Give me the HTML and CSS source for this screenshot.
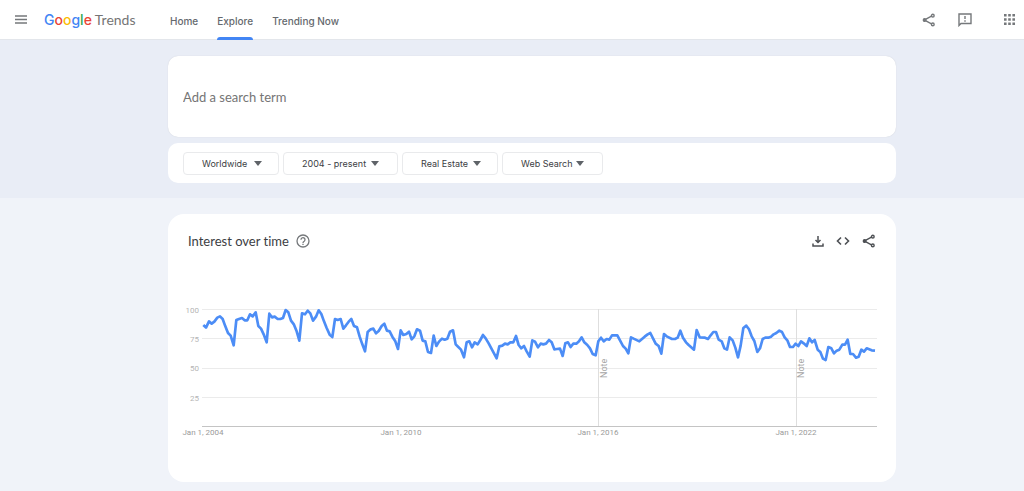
FILE: index.html
```
<!DOCTYPE html>
<html lang="en">
<head>
<meta charset="utf-8">
<title>Google Trends</title>
<link rel="stylesheet" href="styles.css">
</head>
<body>
<svg class="defs" width="0" height="0" aria-hidden="true">
  <symbol id="share" viewBox="0 0 24 24">
    <g fill="none" stroke="currentColor" stroke-width="2.400"><path d="M6 11 17 5M6 13 17 19"/><circle cx="18.500" cy="4.500" r="2.300"/><circle cx="18.500" cy="19.500" r="2.300"/><circle cx="4.500" cy="12" r="2.200" fill="currentColor"/></g>
  </symbol>
</svg>
<header class="topbar">
  <button class="icon-button menu" aria-label="Main menu"><svg width="12" height="9" viewBox="0 0 12 9"><path d="M0 1h12M0 4.500h12M0 8h12" stroke="currentColor" stroke-width="1.400"/></svg></button>
  <a class="logo" href="#" aria-label="Google Trends"><span class="google"><span class="blue">G</span><span class="red">o</span><span class="yellow">o</span><span class="blue">g</span><span class="green">l</span><span class="red">e</span></span><span class="trends">Trends</span></a>
  <nav class="nav">
    <a href="#">Home</a>
    <a href="#" class="active" aria-current="page">Explore</a>
    <a href="#">Trending Now</a>
  </nav>
  <div class="tools">
    <button class="icon-button" aria-label="Share"><svg width="14" height="14"><use href="#share"/></svg></button>
    <button class="icon-button" aria-label="Send feedback"><svg width="14" height="14" viewBox="0 0 14 14"><path d="M1 12.500V1h12v9.500H3z" fill="none" stroke="currentColor" stroke-width="1.400"/><path d="M7 3v3M7 7.300v1.400" stroke="currentColor" stroke-width="1.400"/></svg></button>
    <button class="icon-button apps" aria-label="Google apps"><svg width="11" height="11" viewBox="0 0 11 11" fill="currentColor"><path d="M0 0h2.600v2.600H0zM4.200 0h2.600v2.600H4.200zM8.400 0H11v2.600H8.400zM0 4.200h2.600v2.600H0zM4.200 4.200h2.600v2.600H4.200zM8.400 4.200H11v2.600H8.400zM0 8.400h2.600V11H0zM4.200 8.400h2.600V11H4.200zM8.400 8.400H11V11H8.400z"/></svg></button>
  </div>
</header>
<main>
  <section class="hero">
    <div class="card search"><input type="text" placeholder="Add a search term" aria-label="Add a search term"></div>
    <div class="card filters">
      <div class="filter"><select aria-label="Location"><option>Worldwide</option></select><svg class="caret" viewBox="0 0 8 5"><path d="M0 0h8L4 5z"/></svg></div>
      <div class="filter period"><select aria-label="Time range"><option>2004 - present</option></select><svg class="caret" viewBox="0 0 8 5"><path d="M0 0h8L4 5z"/></svg></div>
      <div class="filter"><select aria-label="Category"><option>Real Estate</option></select><svg class="caret" viewBox="0 0 8 5"><path d="M0 0h8L4 5z"/></svg></div>
      <div class="filter source"><select aria-label="Search type"><option>Web Search</option></select><svg class="caret" viewBox="0 0 8 5"><path d="M0 0h8L4 5z"/></svg></div>
    </div>
  </section>
  <section class="results">
    <article class="card chart-card">
      <div class="chart-head">
        <h1>Interest over time</h1>
        <button class="icon-button help" aria-label="Help"><svg width="14" height="14" viewBox="0 0 14 14" fill="none" stroke="currentColor" stroke-width="1.300"><circle cx="7" cy="7" r="6"/><path d="M5 5.700a2 2 0 1 1 3.200 1.500Q7 8 7 9M7 9.800v1.200"/></svg></button>
        <div class="chart-tools">
          <button class="icon-button" aria-label="Download CSV"><svg width="12" height="12" viewBox="0 0 12 12" fill="none" stroke="currentColor" stroke-width="1.500"><path d="M6 1v6.500M3.500 5 6 7.500 8.500 5M1 8.500V11h10V8.500"/></svg></button>
          <button class="icon-button" aria-label="Embed"><svg width="14" height="12" viewBox="0 0 14 12" fill="none" stroke="currentColor" stroke-width="1.600"><path d="M5 2.500 1.500 6 5 9.500M9 2.500 12.500 6 9 9.500"/></svg></button>
          <button class="icon-button" aria-label="Share chart"><svg width="14" height="14"><use href="#share"/></svg></button>
        </div>
      </div>
      <svg class="chart" viewBox="168 300 728 140" role="img" aria-label="Interest over time">
        <g class="grid"><path d="M202 309.500h675M202 338.500h675M202 368.500h675M202 397.500h675"/><path class="note-line" d="M598.500 309v117M796.500 309v117"/><path class="axis" d="M202 426.500h675"/></g>
        <g class="scale"><text x="199" y="313">100</text><text x="199" y="342">75</text><text x="199" y="371">50</text><text x="199" y="401">25</text></g>
        <g class="dates"><text x="203" y="435">Jan 1, 2004</text><text x="401" y="435">Jan 1, 2010</text><text x="598" y="435">Jan 1, 2016</text><text x="796" y="435">Jan 1, 2022</text></g>
        <g class="notes"><text transform="translate(607 378) rotate(-90)">Note</text><text transform="translate(804 378) rotate(-90)">Note</text></g>
        <polyline class="series" transform="translate(180 300) scale(.33333)" points="70,75 78,83 87,64 95,71 103,65 112,53 120,49 128,57 136,79 144,99 152,107 161,136 169,60 177,57 186,54 194,61 202,61 210,43 218,49 227,37 235,78 243,86 251,103 260,127 268,41 276,52 284,50 293,57 301,57 309,54 317,30 325,37 333,62 342,74 350,94 358,122 366,40 375,43 383,32 391,40 399,62 408,50 416,31 424,42 432,64 440,84 449,104 457,111 465,57 473,60 482,57 490,86 498,76 506,65 514,57 522,78 531,82 539,110 547,133 555,154 563,96 572,88 580,86 588,100 596,93 605,78 613,71 621,92 629,94 637,110 646,124 654,147 662,91 670,105 679,102 687,95 695,118 703,109 711,88 720,92 728,122 736,124 744,156 753,159 761,107 769,138 777,125 786,116 794,119 802,116 810,95 819,91 827,133 835,141 843,149 852,172 860,127 868,124 876,142 884,127 893,133 901,120 909,105 917,115 926,130 934,145 942,160 950,175 958,139 967,137 975,131 983,133 991,127 1000,127 1008,108 1016,135 1024,145 1032,138 1040,154 1049,170 1057,121 1065,125 1074,142 1082,131 1090,133 1098,131 1107,120 1115,127 1123,148 1131,147 1140,146 1148,168 1156,130 1164,127 1172,141 1180,131 1189,131 1197,124 1205,112 1213,127 1222,135 1230,145 1238,162 1247,166 1255,124 1263,113 1271,124 1280,117 1288,119 1296,106 1312,106 1320,121 1329,138 1337,146 1345,160 1353,112 1361,116 1378,124 1386,117 1394,110 1403,103 1411,99 1419,115 1427,131 1436,138 1444,161 1452,102 1460,109 1476,117 1485,117 1493,113 1501,92 1509,113 1518,127 1526,135 1542,149 1550,90 1559,112 1575,113 1584,117 1592,106 1600,96 1608,96 1616,119 1625,124 1633,145 1641,149 1649,112 1658,121 1666,143 1674,172 1682,137 1690,84 1699,77 1707,88 1715,109 1723,123 1732,156 1740,145 1748,117 1756,113 1765,113 1773,110 1781,103 1789,99 1798,92 1806,96 1814,112 1822,121 1830,141 1839,141 1847,131 1855,138 1863,124 1871,130 1880,138 1888,115 1896,127 1904,120 1913,149 1921,156 1929,176 1937,180 1945,141 1954,145 1962,160 1970,152 1978,149 1987,134 1995,134 2003,119 2011,162 2019,162 2028,173 2036,170 2044,149 2052,155 2060,145 2075,151 2085,152"/>
      </svg>
    </article>
  </section>
</main>
</body>
</html>
```
FILE: styles.css
```
* { box-sizing: border-box; }
body { margin: 0; background: #f0f3f9; color: #3c4043; font-family: Lato, "Open Sans", sans-serif; font-variant-ligatures: none; }
.defs { position: absolute; }
button, input, select { font: inherit; color: inherit; }
.icon-button { display: grid; place-items: center; padding: 0; border: 0; background: none; color: #75787b; cursor: pointer; }
.icon-button svg { display: block; }

.topbar { display: flex; align-items: center; height: 40px; padding: 0 9px 0 15px; background: #fff; border-bottom: 1px solid #e3e6eb; }
.logo { display: flex; align-items: baseline; gap: 3px; margin-left: 17px; width: 90px; color: #757575; font-size: 14px; line-height: 20px; text-decoration: none; white-space: nowrap; }
.google { font-size: 14px; font-weight: 500; font-family: Inter, sans-serif; }
.blue { color: #4285f4; }
.red { color: #ea4335; }
.yellow { color: #fbbc05; }
.green { color: #34a853; }
.nav { display: flex; align-self: stretch; gap: 19px; margin-left: 36px; font-family: Inter, sans-serif; font-size: 10px; font-weight: 500; white-space: nowrap; }
.nav a { position: relative; display: flex; align-items: center; height: 40px; padding-top: 2px; color: #65696e; text-decoration: none; }
.nav .active::after { content: ""; position: absolute; inset: auto 0 0; height: 3px; border-radius: 3px 3px 0 0; background: #4285f4; }
.tools { display: flex; align-items: center; gap: 22px; margin-left: auto; }
.apps { margin-left: 10px; }

.hero { display: grid; gap: 6px; padding: 16px 128px 15px 168px; background: #e9edf6; }
.card { background: #fff; border-radius: 10px; }
.search { display: flex; height: 81px; padding: 0 15px; box-shadow: 0 0 1px #c5c9d2; }
.search input { flex: 1; min-width: 0; padding: 0; border: 0; outline: 0; background: none; font-size: 13px; }
.search input::placeholder { color: #757575; opacity: 1; }
.filters { display: flex; gap: 4px; padding: 9px 15px 8px; }
.filter { display: grid; align-items: center; width: 96px; height: 23px; border: 1px solid #e9eaec; border-radius: 4px; }
.period { width: 115px; }
.source { width: 101px; }
.filter select { grid-area: 1 / 1; width: 100%; padding: 0 0 0 18px; border: 0; outline: 0; background: none; appearance: none; font-family: Inter, sans-serif; font-size: 9px; }
.caret { grid-area: 1 / 1; justify-self: end; width: 8px; height: 5px; margin-right: 16px; fill: #5f6368; pointer-events: none; }
.period .caret, .source .caret { margin-right: 18px; }

.results { padding: 16px 128px 9px 168px; }
.chart-card { border-radius: 16px; padding: 17px 0 42px; }
.chart-head { display: flex; align-items: center; height: 20px; padding: 0 20px; }
.chart-head h1 { margin: 0; font-size: 13px; font-weight: 400; }
.help { margin-left: 7px; }
.chart-tools { display: flex; align-items: center; gap: 12px; margin-left: auto; }
.chart-tools .icon-button { color: #4d5054; }
.chart { display: block; width: 100%; margin-top: 49px; font-family: Roboto, sans-serif; font-size: 8px; }
.grid { fill: none; stroke: #ebebeb; }
.grid .note-line { stroke: #dedede; }
.grid .axis { stroke: #c4c4c4; }
.scale { fill: #b5b5b5; text-anchor: end; }
.dates { fill: #9a9a9a; text-anchor: middle; }
.notes { fill: #a6a6a6; font-size: 9px; }
.series { fill: none; stroke: #4c8df6; stroke-width: 8; stroke-linejoin: round; }
```
